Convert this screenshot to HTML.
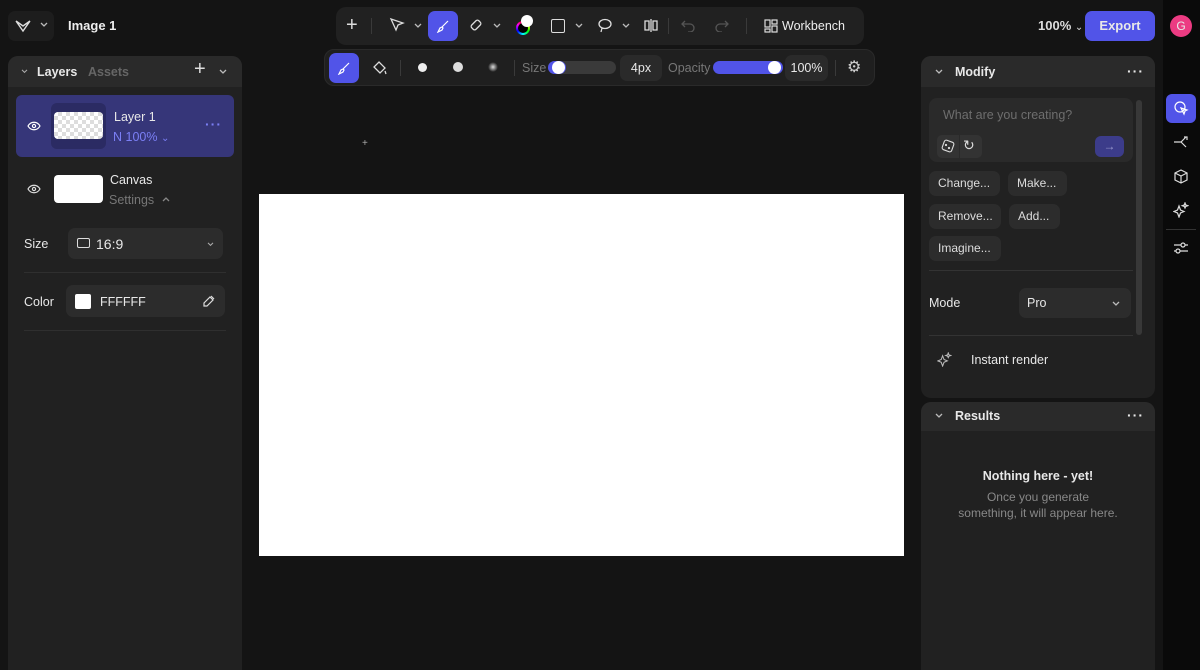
<!DOCTYPE html>
<html style="width:1200px;height:670px;overflow:hidden"><head><style>
*{box-sizing:border-box;margin:0;padding:0}
body{width:1200px;height:670px;overflow:hidden;background:#141414;font-family:"Liberation Sans",sans-serif;color:#e8e8e8;position:relative;font-size:12px}
.a{position:absolute}
.panel{background:#212121;border-radius:10px}
.hdr{background:#2a2a2a;border-radius:10px 10px 0 0}
.chip{background:#2c2c2c;border-radius:7px;position:absolute;font-size:12px;color:#ddd;padding:0 9px;line-height:25px}
svg{position:absolute}
</style></head><body>
<div class="a" style="left:1163px;top:0;width:37px;height:670px;background:#0a0a0a"></div>
<div class="a" style="left:8px;top:11px;width:46px;height:30px;background:#1d1d1d;border-radius:7px"></div>
<svg style="left:15px;top:19px" width="16" height="14" viewBox="0 0 16 14" fill="none" stroke="#ddd" stroke-width="1.4"><path d="M1 2l7 10 7-10M1 2l7 5 7-5"/></svg>
<svg style="left:40px;top:22px" width="8" height="6" viewBox="0 0 8 6" fill="none" stroke="#bbb" stroke-width="1.3"><path d="M1 1l3 3 3-3"/></svg>
<div class="a" style="left:68px;top:18px;font-size:13px;font-weight:bold;color:#eee">Image 1</div>
<div class="a" style="left:336px;top:7px;width:528px;height:38px;background:#212121;border-radius:10px"></div>
<div class="a" style="left:346px;top:13px;font-size:20px;color:#ddd;line-height:24px">+</div>
<div class="a" style="left:371px;top:18px;width:1px;height:16px;background:#3a3a3a"></div>
<svg style="left:389px;top:17px" width="16" height="16" viewBox="0 0 16 16" fill="none" stroke="#ddd" stroke-width="1.3"><path d="M2 2l12 4-5 2-2 5z"/></svg>
<svg style="left:414px;top:23px" width="8" height="6" viewBox="0 0 8 6" fill="none" stroke="#bbb" stroke-width="1.3"><path d="M1 1l3 3 3-3"/></svg>
<div class="a" style="left:428px;top:11px;width:30px;height:30px;background:#5154e8;border-radius:7px"></div>
<svg style="left:436px;top:19px" width="14" height="14" viewBox="0 0 14 14" fill="none" stroke="#fff" stroke-width="1.2"><path d="M12 2L6 8M6 8l-2 1-2 4 4-2 1-2z"/></svg>
<svg style="left:468px;top:17px" width="16" height="16" viewBox="0 0 16 16" fill="none" stroke="#ddd" stroke-width="1.3"><rect x="3" y="5" width="10" height="6" rx="2" transform="rotate(-45 8 8)"/></svg>
<svg style="left:493px;top:23px" width="8" height="6" viewBox="0 0 8 6" fill="none" stroke="#bbb" stroke-width="1.3"><path d="M1 1l3 3 3-3"/></svg>
<div class="a" style="left:516px;top:21px;width:14px;height:14px;border-radius:50%;background:conic-gradient(red,yellow,lime,cyan,blue,magenta,red)"></div>
<div class="a" style="left:518px;top:23px;width:10px;height:10px;border-radius:50%;background:#000"></div>
<div class="a" style="left:521px;top:15px;width:12px;height:12px;border-radius:50%;background:#fff"></div>
<div class="a" style="left:551px;top:19px;width:14px;height:14px;border:1.3px solid #ddd;border-radius:2px"></div>
<svg style="left:575px;top:23px" width="8" height="6" viewBox="0 0 8 6" fill="none" stroke="#bbb" stroke-width="1.3"><path d="M1 1l3 3 3-3"/></svg>
<svg style="left:597px;top:17px" width="16" height="16" viewBox="0 0 16 16" fill="none" stroke="#ddd" stroke-width="1.3"><ellipse cx="8" cy="7" rx="6" ry="4.5"/><path d="M5 11l-1 4"/></svg>
<svg style="left:622px;top:23px" width="8" height="6" viewBox="0 0 8 6" fill="none" stroke="#bbb" stroke-width="1.3"><path d="M1 1l3 3 3-3"/></svg>
<svg style="left:643px;top:18px" width="16" height="15" viewBox="0 0 16 15" fill="none" stroke="#ddd" stroke-width="1.3"><path d="M8 1v13M6 3L2 3v9l4 0zM10 3l4 0v9l-4 0z"/></svg>
<div class="a" style="left:668px;top:18px;width:1px;height:16px;background:#3a3a3a"></div>
<svg style="left:681px;top:18px" width="14" height="14" viewBox="0 0 14 14" fill="none" stroke="#555" stroke-width="1.3"><path d="M4 3L1 6l3 3M1 6h8a4 4 0 010 8H7"/></svg>
<svg style="left:715px;top:18px" width="14" height="14" viewBox="0 0 14 14" fill="none" stroke="#555" stroke-width="1.3"><path d="M10 3l3 3-3 3M13 6H5a4 4 0 000 8h2"/></svg>
<div class="a" style="left:746px;top:18px;width:1px;height:16px;background:#3a3a3a"></div>
<svg style="left:764px;top:19px" width="14" height="14" viewBox="0 0 14 14" fill="none" stroke="#ddd" stroke-width="1.2"><rect x="1" y="1" width="5" height="7"/><rect x="8" y="1" width="5" height="4"/><rect x="1" y="10" width="5" height="3"/><rect x="8" y="7" width="5" height="6"/></svg>
<div class="a" style="left:782px;top:19px;font-size:12.5px;color:#eee">Workbench</div>
<div class="a" style="left:324px;top:49px;width:551px;height:37px;background:#1f1f1f;border-radius:10px;border:1px solid #2a2a2a"></div>
<div class="a" style="left:329px;top:53px;width:30px;height:30px;background:#5154e8;border-radius:7px"></div>
<svg style="left:337px;top:61px" width="14" height="14" viewBox="0 0 14 14" fill="none" stroke="#fff" stroke-width="1.2"><path d="M12 2L6 8M6 8l-2 1-2 4 4-2 1-2z"/></svg>
<svg style="left:372px;top:60px" width="16" height="16" viewBox="0 0 16 16" fill="none" stroke="#ddd" stroke-width="1.3"><path d="M7 2l6 6-5 5-6-6zM13 11l1 3"/></svg>
<div class="a" style="left:400px;top:60px;width:1px;height:16px;background:#3a3a3a"></div>
<div class="a" style="left:418px;top:63px;width:9px;height:9px;border-radius:50%;background:#eee"></div>
<div class="a" style="left:453px;top:62px;width:10px;height:10px;border-radius:50%;background:#ddd"></div>
<div class="a" style="left:488px;top:62px;width:10px;height:10px;border-radius:50%;background:radial-gradient(#ddd,#1f1f1f 70%)"></div>
<div class="a" style="left:514px;top:60px;width:1px;height:16px;background:#3a3a3a"></div>
<div class="a" style="left:522px;top:61px;color:#777;font-size:12.5px">Size</div>
<div class="a" style="left:548px;top:61px;width:68px;height:13px;border-radius:7px;background:#3a3a3a"></div>
<div class="a" style="left:548px;top:61px;width:18px;height:13px;border-radius:7px;background:#5154e8"></div>
<div class="a" style="left:552px;top:61px;width:13px;height:13px;border-radius:50%;background:#fff"></div>
<div class="a" style="left:620px;top:55px;width:42px;height:26px;border-radius:7px;background:#2a2a2a;text-align:center;line-height:26px;font-size:12.5px">4px</div>
<div class="a" style="left:668px;top:61px;color:#777;font-size:12.5px">Opacity</div>
<div class="a" style="left:713px;top:61px;width:70px;height:13px;border-radius:7px;background:#5154e8"></div>
<div class="a" style="left:768px;top:61px;width:13px;height:13px;border-radius:50%;background:#fff"></div>
<div class="a" style="left:785px;top:55px;width:43px;height:26px;border-radius:7px;background:#2a2a2a;text-align:center;line-height:26px;font-size:12.5px">100%</div>
<div class="a" style="left:835px;top:60px;width:1px;height:16px;background:#3a3a3a"></div>
<div class="a" style="left:847px;top:57px;font-size:16px;color:#ccc">⚙</div>
<div class="a" style="left:1038px;top:18px;font-size:13px;font-weight:bold;color:#ddd">100% <span style="font-weight:normal;font-size:10px">⌄</span></div>
<div class="a" style="left:1085px;top:11px;width:70px;height:30px;background:#5154e8;border-radius:7px;text-align:center;line-height:30px;font-weight:bold;font-size:13px">Export</div>
<div class="a" style="left:1170px;top:15px;width:22px;height:22px;border-radius:50%;background:#ec3b82;text-align:center;line-height:22px;font-size:12px">G</div>
<div class="a" style="left:1166px;top:94px;width:30px;height:29px;background:#5154e8;border-radius:6px"></div>
<svg style="left:1174px;top:101px" width="15" height="15" viewBox="0 0 15 15" fill="none" stroke="#fff" stroke-width="1.2"><circle cx="6" cy="6" r="5"/><path d="M7 7l6 2-2 1-1 3z"/></svg>
<svg style="left:1173px;top:135px" width="16" height="14" viewBox="0 0 16 14" fill="none" stroke="#ddd" stroke-width="1.2"><path d="M1 7h7l5-5M8 7l5 5M11 2h3v3"/></svg>
<svg style="left:1174px;top:169px" width="14" height="15" viewBox="0 0 14 15" fill="none" stroke="#ddd" stroke-width="1.2"><path d="M7 1l6 3v7l-6 3-6-3V4zM1 4l6 3 6-3M7 7v7"/></svg>
<svg style="left:1173px;top:202px" width="16" height="16" viewBox="0 0 16 16" fill="none" stroke="#ddd" stroke-width="1.2"><path d="M6 4l1.5 4L11 9.5 7.5 11 6 15 4.5 11 1 9.5 4.5 8zM12 1l.7 2 2 .7-2 .7L12 6l-.7-1.6-2-.7 2-.7z"/></svg>
<div class="a" style="left:1166px;top:229px;width:30px;height:1px;background:#333"></div>
<svg style="left:1173px;top:241px" width="16" height="14" viewBox="0 0 16 14" fill="none" stroke="#ddd" stroke-width="1.2"><path d="M1 4h14M1 10h14"/><circle cx="10" cy="4" r="2" fill="#0a0a0a"/><circle cx="5" cy="10" r="2" fill="#0a0a0a"/></svg>
<div class="a panel" style="left:8px;top:56px;width:234px;height:614px;border-radius:10px 10px 0 0"></div>
<div class="a hdr" style="left:8px;top:56px;width:234px;height:31px"></div>
<svg style="left:21px;top:69px" width="7" height="5" viewBox="0 0 8 6" fill="none" stroke="#aaa" stroke-width="1.3"><path d="M1 1l3 3 3-3"/></svg>
<div class="a" style="left:37px;top:65px;font-weight:bold;font-size:12.5px">Layers</div>
<div class="a" style="left:88px;top:65px;font-weight:bold;font-size:12.5px;color:#666">Assets</div>
<div class="a" style="left:194px;top:58px;font-size:20px;color:#ddd">+</div>
<svg style="left:219px;top:69px" width="8" height="6" viewBox="0 0 8 6" fill="none" stroke="#bbb" stroke-width="1.3"><path d="M1 1l3 3 3-3"/></svg>
<div class="a" style="left:16px;top:95px;width:218px;height:62px;background:#363679;border-radius:6px"></div>
<svg style="left:27px;top:121px" width="14" height="10" viewBox="0 0 14 10" fill="none" stroke="#fff" stroke-width="1.2"><path d="M1 5c3-5 9-5 12 0-3 5-9 5-12 0z"/><circle cx="7" cy="5" r="1.6"/></svg>
<div class="a" style="left:51px;top:103px;width:55px;height:46px;background:#2b2b63;border-radius:6px"></div>
<div class="a" style="left:54px;top:112px;width:49px;height:27px;border-radius:4px;background-color:#fff;background-image:linear-gradient(45deg,#ddd 25%,transparent 25%,transparent 75%,#ddd 75%),linear-gradient(45deg,#ddd 25%,transparent 25%,transparent 75%,#ddd 75%);background-size:8px 8px;background-position:0 0,4px 4px"></div>
<div class="a" style="left:114px;top:110px;font-size:12.5px">Layer 1</div>
<div class="a" style="left:113px;top:130px;font-size:12.5px;color:#7b7ff5">N 100% <span style="font-size:10px">⌄</span></div>
<div class="a" style="left:205px;top:116px;color:#7b7ff5;font-size:14px;letter-spacing:1px;font-weight:bold">···</div>
<svg style="left:27px;top:184px" width="14" height="10" viewBox="0 0 14 10" fill="none" stroke="#ddd" stroke-width="1.2"><path d="M1 5c3-5 9-5 12 0-3 5-9 5-12 0z"/><circle cx="7" cy="5" r="1.6"/></svg>
<div class="a" style="left:54px;top:175px;width:49px;height:28px;background:#fff;border-radius:4px"></div>
<div class="a" style="left:110px;top:173px;font-size:12.5px">Canvas</div>
<div class="a" style="left:109px;top:193px;font-size:12.5px;color:#777">Settings</div>
<svg style="left:162px;top:196px" width="8" height="6" viewBox="0 0 8 6" fill="none" stroke="#888" stroke-width="1.3"><path d="M1 5l3-3 3 3"/></svg>
<div class="a" style="left:24px;top:237px;font-size:12.5px">Size</div>
<div class="a" style="left:68px;top:228px;width:155px;height:31px;background:#2c2c2c;border-radius:7px"></div>
<div class="a" style="left:77px;top:238px;width:13px;height:10px;border:1.2px solid #ddd;border-radius:2px"></div>
<div class="a" style="left:96px;top:236px;font-size:14px">16:9</div>
<svg style="left:207px;top:242px" width="7" height="5" viewBox="0 0 8 6" fill="none" stroke="#aaa" stroke-width="1.3"><path d="M1 1l3 3 3-3"/></svg>
<div class="a" style="left:24px;top:272px;width:202px;height:1px;background:#2f2f2f"></div>
<div class="a" style="left:24px;top:295px;font-size:12.5px">Color</div>
<div class="a" style="left:66px;top:285px;width:159px;height:32px;background:#2c2c2c;border-radius:7px"></div>
<div class="a" style="left:75px;top:294px;width:16px;height:15px;background:#fff;border-radius:2px"></div>
<div class="a" style="left:100px;top:295px;font-size:12.5px">FFFFFF</div>
<svg style="left:202px;top:294px" width="14" height="14" viewBox="0 0 14 14" fill="none" stroke="#ddd" stroke-width="1.2"><path d="M9 2l3 3M8 3l3 3-6 6H2v-3z"/></svg>
<div class="a" style="left:24px;top:330px;width:202px;height:1px;background:#2f2f2f"></div>
<div class="a" style="left:259px;top:194px;width:645px;height:362px;background:#fff"></div>
<div class="a" style="left:362px;top:138px;color:#aaa;font-size:10px">+</div>
<div class="a panel" style="left:921px;top:56px;width:234px;height:342px"></div>
<div class="a hdr" style="left:921px;top:56px;width:234px;height:31px"></div>
<svg style="left:935px;top:69px" width="8" height="6" viewBox="0 0 8 6" fill="none" stroke="#bbb" stroke-width="1.3"><path d="M1 1l3 3 3-3"/></svg>
<div class="a" style="left:955px;top:65px;font-weight:bold;font-size:12.5px">Modify</div>
<div class="a" style="left:1127px;top:63px;font-weight:bold;font-size:14px;letter-spacing:1px">···</div>
<div class="a" style="left:929px;top:98px;width:204px;height:64px;background:#2a2a2a;border-radius:8px"></div>
<div class="a" style="left:943px;top:108px;font-size:12.5px;color:#6e6e6e">What are you creating?</div>
<div class="a" style="left:937px;top:135px;width:45px;height:23px;background:#333;border-radius:5px"></div>
<div class="a" style="left:959px;top:135px;width:1px;height:23px;background:#2a2a2a"></div>
<svg style="left:941px;top:139px" width="14" height="14" viewBox="0 0 14 14" fill="none" stroke="#ddd" stroke-width="1.1"><rect x="2" y="2" width="10" height="10" rx="2" transform="rotate(20 7 7)"/><circle cx="5" cy="6" r=".6"/><circle cx="8" cy="9" r=".6"/></svg>
<div class="a" style="left:963px;top:137px;font-size:14px;color:#ddd">↻</div>
<div class="a" style="left:1095px;top:136px;width:29px;height:21px;background:#3c3c8a;border-radius:6px;text-align:center;line-height:20px;color:#9a9ad0">→</div>
<div class="a" style="left:1136px;top:100px;width:6px;height:235px;background:#383838;border-radius:3px"></div>
<div class="chip" style="left:929px;top:171px;width:71px;height:25px">Change...</div>
<div class="chip" style="left:1008px;top:171px;width:59px">Make...</div>
<div class="chip" style="left:929px;top:204px;width:72px">Remove...</div>
<div class="chip" style="left:1009px;top:204px;width:51px">Add...</div>
<div class="chip" style="left:929px;top:236px;width:72px">Imagine...</div>
<div class="a" style="left:929px;top:270px;width:204px;height:1px;background:#333"></div>
<div class="a" style="left:929px;top:296px;font-size:12.5px">Mode</div>
<div class="a" style="left:1019px;top:288px;width:112px;height:30px;background:#2c2c2c;border-radius:7px"></div>
<div class="a" style="left:1027px;top:296px;font-size:12.5px">Pro</div>
<svg style="left:1112px;top:301px" width="8" height="6" viewBox="0 0 8 6" fill="none" stroke="#bbb" stroke-width="1.3"><path d="M1 1l3 3 3-3"/></svg>
<div class="a" style="left:929px;top:335px;width:204px;height:1px;background:#333"></div>
<svg style="left:937px;top:352px" width="15" height="15" viewBox="0 0 16 16" fill="none" stroke="#bbb" stroke-width="1.1"><path d="M6 4l1.5 4L11 9.5 7.5 11 6 15 4.5 11 1 9.5 4.5 8zM12 1l.7 2 2 .7-2 .7L12 6l-.7-1.6-2-.7 2-.7z"/></svg>
<div class="a" style="left:971px;top:353px;font-size:12.5px">Instant render</div>
<div class="a panel" style="left:921px;top:402px;width:234px;height:268px;border-radius:10px 10px 0 0"></div>
<div class="a hdr" style="left:921px;top:402px;width:234px;height:29px"></div>
<svg style="left:935px;top:413px" width="8" height="6" viewBox="0 0 8 6" fill="none" stroke="#bbb" stroke-width="1.3"><path d="M1 1l3 3 3-3"/></svg>
<div class="a" style="left:955px;top:409px;font-weight:bold;font-size:12.5px">Results</div>
<div class="a" style="left:1127px;top:407px;font-weight:bold;font-size:14px;letter-spacing:1px">···</div>
<div class="a" style="left:921px;top:469px;width:234px;text-align:center;font-weight:bold;font-size:12.5px">Nothing here - yet!</div>
<div class="a" style="left:921px;top:490px;width:234px;text-align:center;font-size:12px;color:#888;line-height:15.5px">Once you generate<br>something, it will appear here.</div>
</body></html>
